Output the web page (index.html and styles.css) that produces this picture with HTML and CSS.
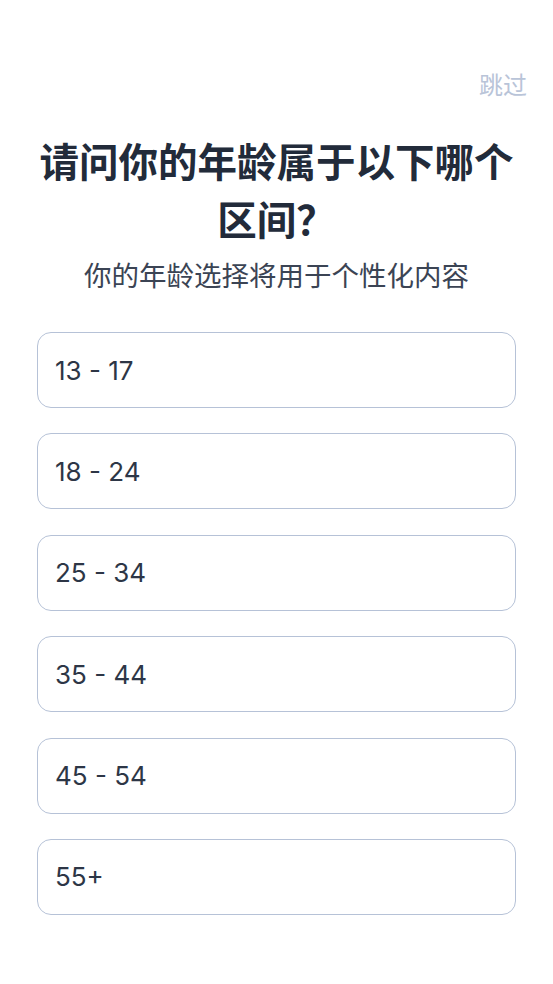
FILE: index.html
```html
<!DOCTYPE html>
<html lang="zh-CN">
<head>
	<meta charset="UTF-8">
	<title>年龄选择</title>
	<link rel="stylesheet" href="styles.css">
</head>
<body>
	<div class="page">
		<div class="top">
			<a class="skip" href="javascript:;">跳过</a>
		</div>
		<h1 class="title">请问你的年龄属于以下哪个区间？</h1>
		<p class="sub">你的年龄选择将用于个性化内容</p>
		<ul class="ages">
			<li>13 - 17</li>
			<li>18 - 24</li>
			<li>25 - 34</li>
			<li>35 - 44</li>
			<li>45 - 54</li>
			<li>55+</li>
		</ul>
	</div>
</body>
</html>
```

FILE: styles.css
```css
*{ margin:0; padding:0; box-sizing:border-box; }
li{ list-style:none; }
a{ text-decoration:none; }
body{ background:#fff; font-family:"Inter", "Noto Sans CJK SC", sans-serif; }

.page{ padding:70px 37px 0; }
.top{ display:flex; justify-content:flex-end; margin-right:-11px; }
.skip{ font-size:24px; line-height:32px; color:#b9c4d8; }

.title{ margin-top:29px; font-family:"Noto Sans CJK SC", sans-serif; font-size:39.5px; line-height:58px; font-weight:600; color:#222b3a; text-align:center; }
.sub{ margin-top:11px; font-size:27.5px; line-height:36px; color:#3b4454; text-align:center; }

.ages{ margin-top:38px; display:flex; flex-direction:column; gap:25.4px; }
.ages li{ height:76px; border:1.5px solid #b6c2d7; border-radius:14px; padding-left:17px; display:flex; align-items:center; font-size:26px; color:#2d3646; }
```
